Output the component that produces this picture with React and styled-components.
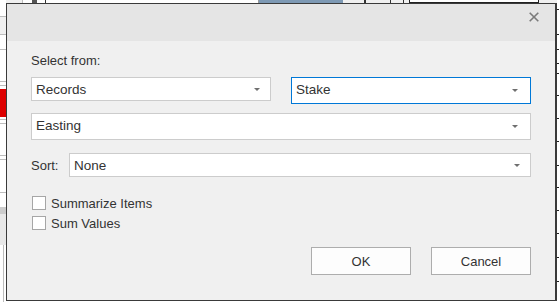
import styled, { createGlobalStyle } from 'styled-components';

const GlobalStyle = createGlobalStyle`
  html, body {
    margin: 0;
    padding: 0;
    background: #ffffff;
  }
  body {
    font-family: "Liberation Sans", Arial, sans-serif;
    color: #333333;
  }
`;

const Screen = styled.div`
  display: flex;
  width: 559px;
  height: 302px;
  overflow: hidden;
  background: #ffffff;
`;

const SideStrip = styled.div`
  display: flex;
  flex-direction: column;
  flex-shrink: 0;
  width: ${({ $w }) => $w}px;
`;

const Band = styled.div`
  box-sizing: border-box;
  flex-shrink: 0;
  height: ${({ $h }) => ($h ? `${$h}px` : 'auto')};
  flex-grow: ${({ $h }) => ($h ? 0 : 1)};
  background: ${({ $bg }) => $bg || '#ffffff'};
  border-bottom: ${({ $line }) => ($line ? `1px solid ${$line}` : 'none')};
  margin-left: ${({ $inset }) => $inset || 0}px;
  border-left: ${({ $inset }) => ($inset ? '1px solid #bdbdbd' : 'none')};
`;

const Middle = styled.div`
  display: flex;
  flex-direction: column;
  width: 551px;
  flex-shrink: 0;
`;

const TopStrip = styled.div`
  display: flex;
  height: 3px;
  flex-shrink: 0;
`;

const Seg = styled.div`
  box-sizing: border-box;
  width: ${({ $w }) => $w}px;
  flex-shrink: 0;
  background: ${({ $bg }) => $bg};
  border-bottom: ${({ $under }) => ($under ? '1px solid #222' : 'none')};
`;

const Dialog = styled.div`
  box-sizing: border-box;
  display: flex;
  flex-direction: column;
  height: 298px;
  border: 1px solid #3a3a3a;
  border-right-width: 2px;
  background: #f0f0f0;
`;

const TitleBar = styled.div`
  display: flex;
  justify-content: flex-end;
  align-items: flex-start;
  height: 37px;
  padding: 8px 16px 0 0;
  box-sizing: border-box;
  background: #e5e5e5;
`;

const CloseButton = styled.div`
  width: 10px;
  height: 10px;
  display: flex;

  svg {
    display: block;
  }
`;

const Body = styled.div`
  display: flex;
  flex-direction: column;
  flex: 1;
  padding: 12px 24px 0 24px;
`;

const Label = styled.div`
  font-size: 13px;
  line-height: 16px;
  color: #333;
`;

const Row = styled.div`
  display: flex;
  align-items: ${({ $align }) => $align || 'center'};
  gap: ${({ $gap }) => $gap || 0}px;
  margin-top: ${({ $top }) => $top || 0}px;
`;

const Combo = styled.div`
  box-sizing: border-box;
  display: flex;
  align-items: center;
  width: ${({ $w }) => ($w ? `${$w}px` : 'auto')};
  flex: ${({ $w }) => ($w ? '0 0 auto' : '1')};
  height: ${({ $h }) => $h}px;
  padding: 0 ${({ $arrowGap }) => $arrowGap}px 0 4px;
  background: #ffffff;
  border: 1px solid ${({ $focused }) => ($focused ? '#0078d7' : '#cccccc')};
  font-size: 13.5px;
  color: #333;
`;

const ComboText = styled.span`
  flex: 1;
  white-space: nowrap;
  padding-bottom: ${({ $lift }) => $lift}px;
`;

const Arrow = styled.span`
  width: 0;
  height: 0;
  border-left: 3px solid transparent;
  border-right: 3px solid transparent;
  border-top: 3px solid #6f6f6f;
`;

const SortLabel = styled.span`
  font-size: 13px;
  width: 38px;
  flex-shrink: 0;
`;

const CheckRow = styled.label`
  display: flex;
  align-items: center;
  gap: 5px;
  height: 14px;
  margin-top: ${({ $top }) => $top}px;
  font-size: 13px;
  color: #333;
`;

const Box = styled.span`
  box-sizing: border-box;
  width: 14px;
  height: 14px;
  margin-left: 1px;
  background: #ffffff;
  border: 1px solid #a6a6a6;
`;

const Buttons = styled.div`
  display: flex;
  justify-content: flex-end;
  gap: 20px;
  margin-top: 17px;
`;

const Button = styled.div`
  box-sizing: border-box;
  width: 100px;
  height: 28px;
  display: flex;
  align-items: center;
  justify-content: center;
  background: #fdfdfd;
  border: 1px solid #adadad;
  font-size: 13px;
  color: #333;
`;

const leftBands = [
  { h: 17, line: '#bdbdbd' },
  { h: 18, bg: '#f0f0f0', line: '#bdbdbd' },
  { h: 15, line: '#bdbdbd' },
  { h: 32, line: '#bdbdbd' },
  { h: 4, line: '#bdbdbd' },
  { h: 3 },
  { h: 28, bg: '#dd0000' },
  { h: 3, line: '#bdbdbd' },
  { h: 4, line: '#bdbdbd' },
  { h: 32, line: '#bdbdbd' },
  { h: 4, line: '#bdbdbd' },
  { h: 33, line: '#bdbdbd' },
  { h: 14 },
  { h: 7, bg: '#cccccc' },
  { h: 31, bg: '#e8e8e8' },
];

const rightBands = [10, 25, 15, 14, 10, 22, 23, 23, 24, 22, 23, 23, 24, 24];

const topSegs = [
  { w: 16, bg: '#f0f0f0' },
  { w: 1, bg: '#bdbdbd' },
  { w: 9, bg: '#ffffff' },
  { w: 5, bg: '#555555' },
  { w: 8, bg: '#ffffff' },
  { w: 1, bg: '#333333' },
  { w: 212, bg: '#ffffff' },
  { w: 1, bg: '#999999' },
  { w: 84, bg: '#7d99b4' },
  { w: 21, bg: '#f0f0f0' },
  { w: 2, bg: '#333333' },
  { w: 24, bg: '#f0f0f0' },
  { w: 1, bg: '#333333' },
  { w: 12, bg: '#f0f0f0' },
  { w: 1, bg: '#333333' },
  { w: 5, bg: '#f0f0f0' },
  { w: 1, bg: '#222222' },
  { w: 128, bg: '#ffffff', under: true },
  { w: 1, bg: '#222222' },
  { w: 18, bg: '#f0f0f0' },
];

function CloseIcon() {
  return (
    <svg width="10" height="10" viewBox="0 0 10 10">
      <path d="M0.7 0.7 L9.3 9.3 M9.3 0.7 L0.7 9.3" stroke="#7a7a7a" strokeWidth="1.6" fill="none" />
    </svg>
  );
}

function Select({ value, width, height = 24, focused, arrowGap = 10 }) {
  return (
    <Combo $w={width} $h={height} $focused={focused} $arrowGap={arrowGap}>
      <ComboText $lift={height > 24 ? 2 : 0}>{value}</ComboText>
      <Arrow />
    </Combo>
  );
}

export default function App() {
  return (
    <>
      <GlobalStyle />
      <Screen>
        <SideStrip $w={6}>
          {leftBands.map((b, i) => (
            <Band key={i} $h={b.h} $bg={b.bg} $line={b.line} />
          ))}
          <Band $inset={3} />
        </SideStrip>

        <Middle>
          <TopStrip>
            {topSegs.map((s, i) => (
              <Seg key={i} $w={s.w} $bg={s.bg} $under={s.under} />
            ))}
          </TopStrip>

          <Dialog>
            <TitleBar>
              <CloseButton>
                <CloseIcon />
              </CloseButton>
            </TitleBar>

            <Body>
              <Label>Select from:</Label>

              <Row $top={8} $gap={20} $align="flex-start">
                <Select value="Records" width={240} height={24} />
                <Select value="Stake" width={240} height={27} focused arrowGap={12} />
              </Row>

              <Row $top={9}>
                <Select value="Easting" height={27} arrowGap={12} />
              </Row>

              <Row $top={13}>
                <SortLabel>Sort:</SortLabel>
                <Select value="None" height={24} arrowGap={10} />
              </Row>

              <CheckRow $top={19}>
                <Box />
                Summarize Items
              </CheckRow>
              <CheckRow $top={6}>
                <Box />
                Sum Values
              </CheckRow>

              <Buttons>
                <Button>OK</Button>
                <Button>Cancel</Button>
              </Buttons>
            </Body>
          </Dialog>
        </Middle>

        <SideStrip $w={2}>
          {rightBands.map((h, i) => (
            <Band key={i} $h={h} $line="#222222" />
          ))}
          <Band />
        </SideStrip>
      </Screen>
    </>
  );
}
